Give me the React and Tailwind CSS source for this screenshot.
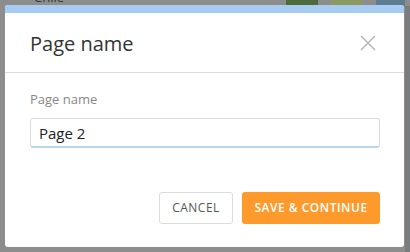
import React, { useState } from 'react';

const App = () => {
  const [pageName, setPageName] = useState('Page 2');

  return (
    <div
      className="relative w-[410px] h-[252px] overflow-hidden bg-[#8d8d8d] p-[5px]"
      style={{ fontFamily: '"Open Sans", "Noto Sans", sans-serif' }}
    >
      {/* Dimmed app behind the modal */}
      <div className="absolute inset-x-0 top-0 h-[6px] flex">
        <span className="ml-[34px] mt-[-9px] text-[13px] leading-none text-[#333]">Chile</span>
        <div className="ml-auto w-[32px] h-full bg-[#4d6a3b]" />
        <div className="ml-[13px] w-[31px] h-full bg-[#8c9a62]" />
        <div className="ml-[14px] mr-[5px] w-[29px] h-full bg-[#5e7b91]" />
      </div>
      <div className="absolute right-0 top-[6px] w-[5px] h-full bg-[#7a7d80]" />

      {/* Modal */}
      <div className="relative w-[399px] h-[242px] bg-white rounded-[3px] overflow-hidden flex flex-col">
        <div className="h-[8px] bg-[#a6cdf1]" />

        {/* Header */}
        <div className="h-[60px] px-[25px] flex items-center justify-between border-b border-[#dcdcdc]">
          <h1 className="text-[20px] text-[#333] pt-[2px]">Page name</h1>
          <button className="w-[16px] h-[16px] mr-[3px] text-[#b0b0b0]">
            <svg viewBox="0 0 16 16" width="16" height="16" fill="none" stroke="currentColor" strokeWidth="1.3">
              <path d="M1 1 L15 15 M15 1 L1 15" />
            </svg>
          </button>
        </div>

        {/* Body */}
        <div className="px-[25px] pt-[17px]">
          <label className="block text-[13px] text-[#888] leading-[18px]">Page name</label>
          <input
            value={pageName}
            onChange={(e) => setPageName(e.target.value)}
            className="mt-[10px] w-[350px] h-[30px] px-[8px] text-[15px] text-[#222] border border-[#dcdcdc] border-b-2 border-b-[#b9d6f0] rounded-[3px] outline-none"
            style={{ fontFamily: '"Open Sans", "Noto Sans", sans-serif' }}
          />
        </div>

        {/* Footer */}
        <div className="mt-auto mb-[23px] px-[24px] flex justify-end gap-[9px]">
          <button className="w-[74px] h-[32px] text-[12px] tracking-[0.5px] text-[#555] border border-[#dcdcdc] rounded-[3px] bg-white">
            CANCEL
          </button>
          <button className="w-[138px] h-[32px] text-[12px] tracking-[0.5px] text-white bg-[#fd9a2b] rounded-[3px] font-semibold">
            SAVE &amp; CONTINUE
          </button>
        </div>
      </div>
    </div>
  );
};

export default App;
